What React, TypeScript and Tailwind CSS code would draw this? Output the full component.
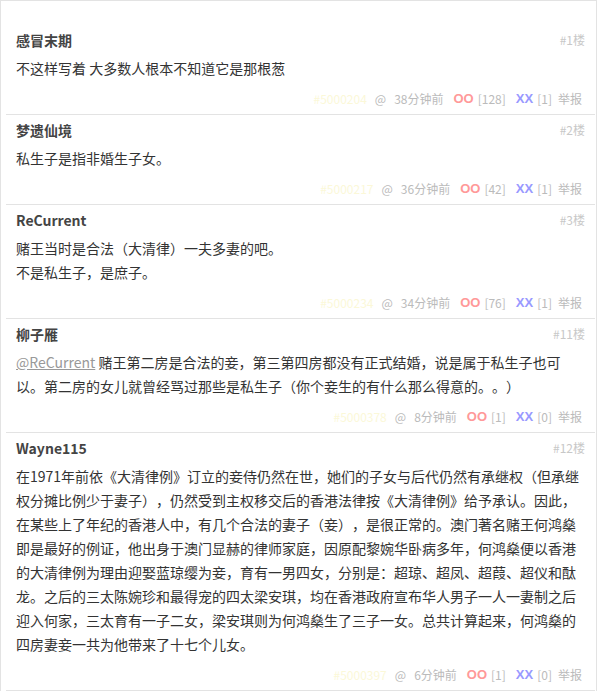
import type { ReactNode } from 'react';

type Post = {
  floor: number;
  author: string;
  body: ReactNode;
  id: string;
  time: string;
  oo: number;
  xx: number;
};

const posts: Post[] = [
  {
    floor: 1,
    author: '感冒末期',
    body: '不这样写着 大多数人根本不知道它是那根葱',
    id: '#5000204',
    time: '38分钟前',
    oo: 128,
    xx: 1,
  },
  {
    floor: 2,
    author: '梦遗仙境',
    body: '私生子是指非婚生子女。',
    id: '#5000217',
    time: '36分钟前',
    oo: 42,
    xx: 1,
  },
  {
    floor: 3,
    author: 'ReCurrent',
    body: (
      <>
        赌王当时是合法（大清律）一夫多妻的吧。
        <br />
        不是私生子，是庶子。
      </>
    ),
    id: '#5000234',
    time: '34分钟前',
    oo: 76,
    xx: 1,
  },
  {
    floor: 11,
    author: '柳子雁',
    body: (
      <>
        <a className="text-[#999] underline">@ReCurrent</a>{' '}
        赌王第二房是合法的妾，第三第四房都没有正式结婚，说是属于私生子也可以。第二房的女儿就曾经骂过那些是私生子（你个妾生的有什么那么得意的。。）
      </>
    ),
    id: '#5000378',
    time: '8分钟前',
    oo: 1,
    xx: 0,
  },
  {
    floor: 12,
    author: 'Wayne115',
    body:
      '在1971年前依《大清律例》订立的妾侍仍然在世，她们的子女与后代仍然有承继权（但承继权分摊比例少于妻子），仍然受到主权移交后的香港法律按《大清律例》给予承认。因此，在某些上了年纪的香港人中，有几个合法的妻子（妾），是很正常的。澳门著名赌王何鸿燊即是最好的例证，他出身于澳门显赫的律师家庭，因原配黎婉华卧病多年，何鸿燊便以香港的大清律例为理由迎娶蓝琼缨为妾，育有一男四女，分别是：超琼、超凤、超葭、超仪和酞龙。之后的三太陈婉珍和最得宠的四太梁安琪，均在香港政府宣布华人男子一人一妻制之后迎入何家，三太育有一子二女，梁安琪则为何鸿燊生了三子一女。总共计算起来，何鸿燊的四房妻妾一共为他带来了十七个儿女。',
    id: '#5000397',
    time: '6分钟前',
    oo: 1,
    xx: 0,
  },
];

function PostItem({ post }: { post: Post }) {
  return (
    <div className="border-b border-[#e3e3e3] px-[10px] pt-[5px] pb-[5px]">
      {/* author + floor */}
      <div className="flex items-center justify-between leading-[20px]">
        <span className="text-[14px] font-bold text-[#444]">{post.author}</span>
        <span className="text-[12px] text-[#c8c8c8]">#{post.floor}楼</span>
      </div>

      <div className="mt-[6px] text-[14px] leading-[24px] text-[#333] [text-spacing-trim:space-all]">
        {post.body}
      </div>

      {/* footer */}
      <div className="mt-[9px] flex items-center justify-end pr-[3px] text-[12px] leading-[20px] text-[#bbb]">
        <span className="mr-[8px] text-[#fbf8d8]">{post.id}</span>
        <span className="mr-[8px]">@</span>
        <span className="mr-[10px]">{post.time}</span>
        <span className="mr-[4px] font-['Liberation_Sans',sans-serif] text-[13px] font-bold text-[#f99]">OO</span>
        <span className="mr-[10px]">[{post.oo}]</span>
        <span className="mr-[4px] font-['Liberation_Sans',sans-serif] text-[13px] font-bold text-[#99f]">XX</span>
        <span className="mr-[6px]">[{post.xx}]</span>
        <span>举报</span>
      </div>
    </div>
  );
}

export default function App() {
  return (
    <div className="min-h-[692px] bg-white font-['Noto_Sans_CJK_SC',sans-serif]">
      <div className="w-[597px] border-x border-t border-[#e3e3e3] pt-[24px] pl-[5px] pr-[1px]">
        {posts.map((p) => (
          <PostItem key={p.floor} post={p} />
        ))}
      </div>
    </div>
  );
}
